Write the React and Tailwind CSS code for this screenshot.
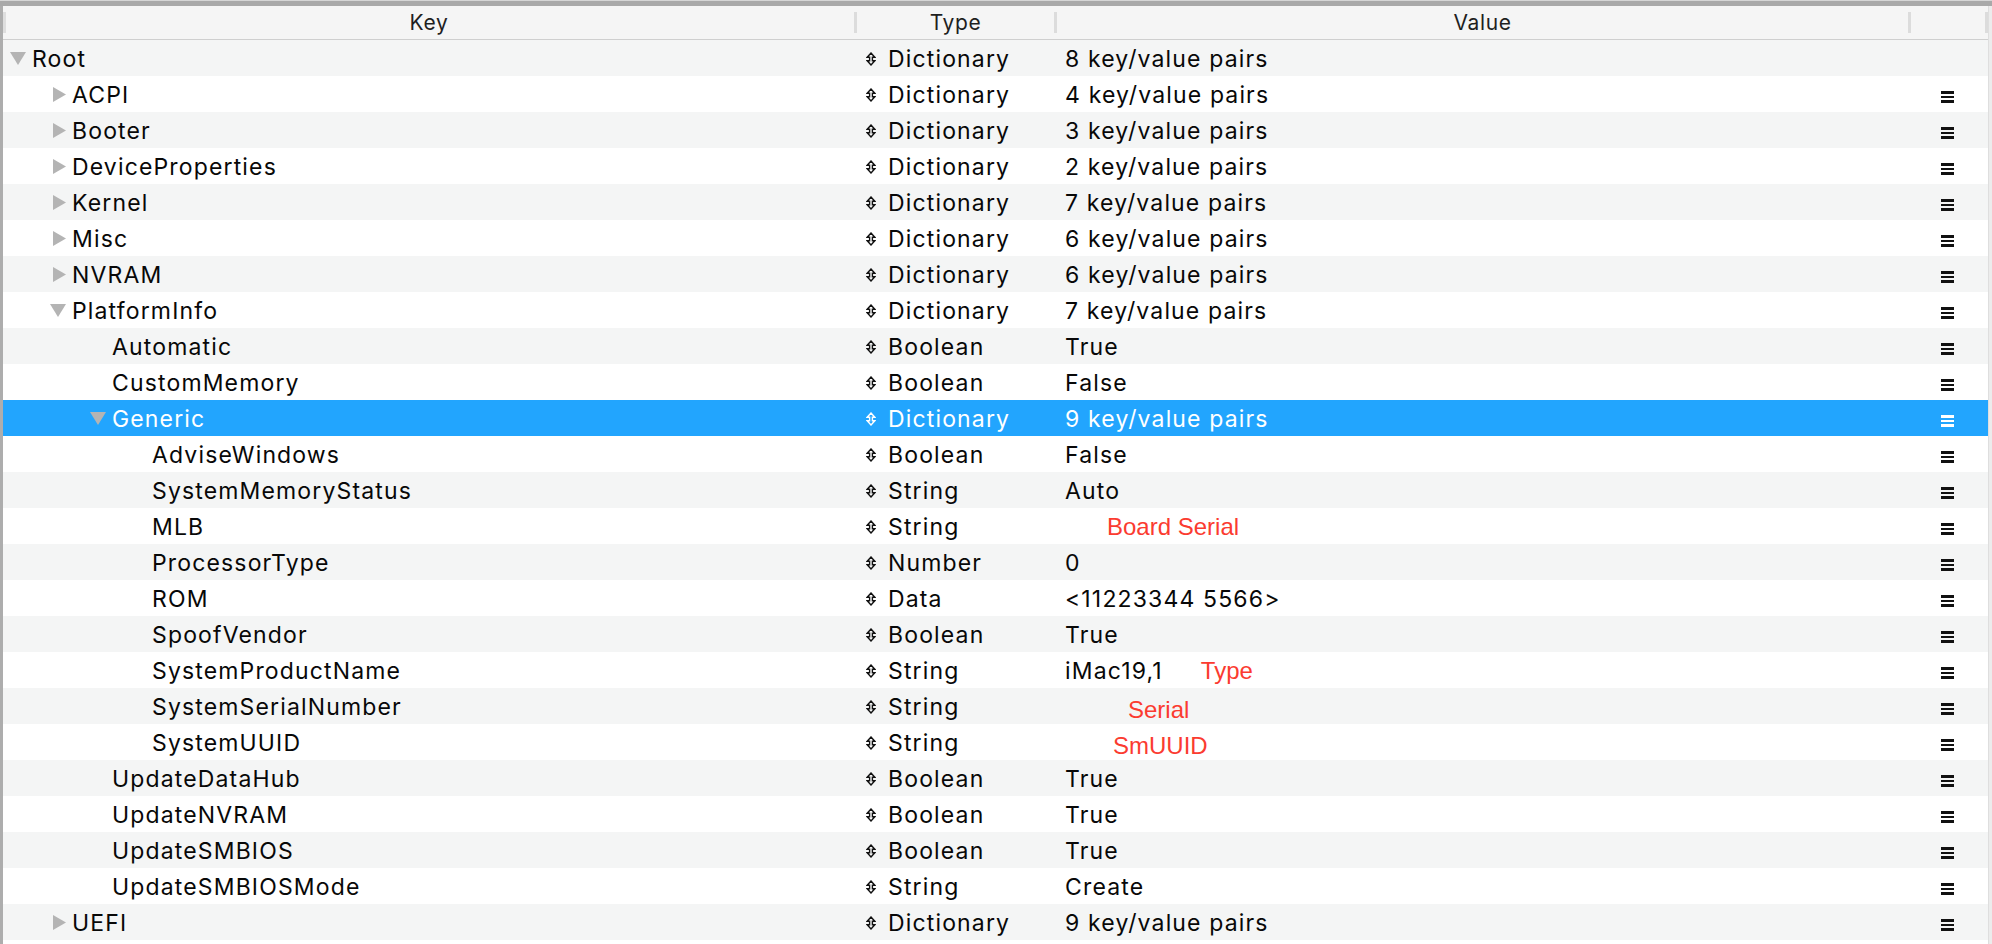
import React from 'react';

const rows = [
  { level: 0, key: 'Root', type: 'Dictionary', value: '8 key/value pairs', open: true, noMenu: true },
  { level: 1, key: 'ACPI', type: 'Dictionary', value: '4 key/value pairs', open: false },
  { level: 1, key: 'Booter', type: 'Dictionary', value: '3 key/value pairs', open: false },
  { level: 1, key: 'DeviceProperties', type: 'Dictionary', value: '2 key/value pairs', open: false },
  { level: 1, key: 'Kernel', type: 'Dictionary', value: '7 key/value pairs', open: false },
  { level: 1, key: 'Misc', type: 'Dictionary', value: '6 key/value pairs', open: false },
  { level: 1, key: 'NVRAM', type: 'Dictionary', value: '6 key/value pairs', open: false },
  { level: 1, key: 'PlatformInfo', type: 'Dictionary', value: '7 key/value pairs', open: true },
  { level: 2, key: 'Automatic', type: 'Boolean', value: 'True' },
  { level: 2, key: 'CustomMemory', type: 'Boolean', value: 'False' },
  { level: 2, key: 'Generic', type: 'Dictionary', value: '9 key/value pairs', open: true, selected: true },
  { level: 3, key: 'AdviseWindows', type: 'Boolean', value: 'False' },
  { level: 3, key: 'SystemMemoryStatus', type: 'String', value: 'Auto' },
  { level: 3, key: 'MLB', type: 'String', value: '', note: 'Board Serial', noteClass: 'ml-[42px]' },
  { level: 3, key: 'ProcessorType', type: 'Number', value: '0' },
  { level: 3, key: 'ROM', type: 'Data', value: '<11223344 5566>' },
  { level: 3, key: 'SpoofVendor', type: 'Boolean', value: 'True' },
  { level: 3, key: 'SystemProductName', type: 'String', value: 'iMac19,1', note: 'Type', noteClass: 'ml-[38px]' },
  { level: 3, key: 'SystemSerialNumber', type: 'String', value: '', note: 'Serial', noteClass: 'ml-[63px] translate-y-[3px]' },
  { level: 3, key: 'SystemUUID', type: 'String', value: '', note: 'SmUUID', noteClass: 'ml-[48px] translate-y-[3px]' },
  { level: 2, key: 'UpdateDataHub', type: 'Boolean', value: 'True' },
  { level: 2, key: 'UpdateNVRAM', type: 'Boolean', value: 'True' },
  { level: 2, key: 'UpdateSMBIOS', type: 'Boolean', value: 'True' },
  { level: 2, key: 'UpdateSMBIOSMode', type: 'String', value: 'Create' },
  { level: 1, key: 'UEFI', type: 'Dictionary', value: '9 key/value pairs', open: false },
];

const indent = ['pl-[7px]', 'pl-[47px]', 'pl-[87px]', 'pl-[127px]'];

const Disclosure = ({ open }) =>
  open ? (
    <svg width="16" height="13" viewBox="0 0 16 13" className="shrink-0">
      <polygon points="0,0 16,0 8,13" fill="#b4b4b4" />
    </svg>
  ) : (
    <svg width="16" height="15" viewBox="0 0 16 15" className="shrink-0">
      <polygon points="3,0 16,7.5 3,15" fill="#b4b4b4" />
    </svg>
  );

const UpDown = ({ color }) => (
  <svg width="10" height="14" viewBox="0 0 10 14" className="shrink-0">
    <path
      d="M5 1 L8.8 5.2 L6.4 5.2 L6.4 8.8 L8.8 8.8 L5 13 L1.2 8.8 L3.6 8.8 L3.6 5.2 L1.2 5.2 Z"
      fill="none"
      stroke={color}
      strokeWidth="1.4"
      strokeLinejoin="miter"
    />
  </svg>
);

const Menu = ({ light }) => (
  <div className="flex flex-col gap-[2px] w-[13px] translate-y-[2px]">
    <div className={`h-[2.6px] ${light ? 'bg-white' : 'bg-[#111]'}`} />
    <div className={`h-[2.6px] ${light ? 'bg-white' : 'bg-[#111]'}`} />
    <div className={`h-[2.6px] ${light ? 'bg-white' : 'bg-[#111]'}`} />
  </div>
);

const HeaderSep = () => <div className="w-[3px] h-[21px] bg-[#dcdcdc]" />;

const App = () => {
  return (
    <div
      className="w-[1992px] h-[944px] overflow-hidden bg-white flex flex-col"
      style={{ fontFamily: 'Inter, "Noto Sans", sans-serif' }}
    >
      {/* window top edge */}
      <div className="h-[1px] bg-[#d6d6d6]" />
      <div className="h-[5px] bg-[#a9a9a9]" />

      <div className="flex flex-1 min-h-0">
        <div className="w-[3px] bg-[#adadad]" />

        <div className="flex-1 flex flex-col min-w-0">
          {/* Header */}
          <div className="h-[34px] bg-[#f5f5f5] border-b border-[#cfcfcf] flex items-center text-[21px] text-[#1f1f1f] tracking-[0.03em]">
            <div className="w-[851px] h-full flex items-center">
              <div className="w-[3px] h-[21px] bg-[#dedede]" />
              <div className="flex-1 text-center pr-[2px]">Key</div>
            </div>
            <HeaderSep />
            <div className="w-[197px] text-center">Type</div>
            <HeaderSep />
            <div className="w-[851px] text-center">Value</div>
            <HeaderSep />
            <div className="flex-1" />
            <HeaderSep />
          </div>

          {/* Rows */}
          <div className="flex flex-col text-[23px] tracking-[0.05em] leading-none">
            {rows.map((r, i) => {
              const bg = r.selected ? 'bg-[#22a5fe]' : i % 2 === 0 ? 'bg-[#f4f5f5]' : 'bg-white';
              const fg = r.selected ? 'text-white' : 'text-[#080808]';
              return (
                <div key={r.key} className={`h-[36px] flex items-center pt-[2px] ${bg} ${fg}`}>
                  <div className={`w-[851px] h-full flex items-center ${indent[r.level]}`}>
                    <div className="w-[22px] flex items-center -translate-y-[1px]">
                      {r.open !== undefined && <Disclosure open={r.open} />}
                    </div>
                    <span>{r.key}</span>
                  </div>
                  <div className="w-[200px] h-full flex items-center pl-[12px] gap-[12px]">
                    <UpDown color={r.selected ? '#ffffff' : '#111111'} />
                    <span>{r.type}</span>
                  </div>
                  <div className="w-[854px] h-full flex items-center pl-[11px]">
                    {r.value && <span>{r.value}</span>}
                    {r.note && (
                      <span
                        className={`text-[24px] tracking-normal text-[#fb3b30] ${r.noteClass}`}
                        style={{ fontFamily: '"Liberation Sans", Arial, sans-serif' }}
                      >
                        {r.note}
                      </span>
                    )}
                  </div>
                  <div className="flex-1 h-full flex items-center pl-[33px]">
                    {!r.noMenu && <Menu light={r.selected} />}
                  </div>
                </div>
              );
            })}
          </div>
        </div>

        <div className="w-[4px] bg-[#ececec] border-l border-[#dedede]" />
      </div>
    </div>
  );
};

export default App;
